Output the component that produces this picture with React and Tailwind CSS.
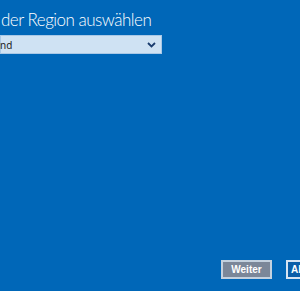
export default function App() {
  return (
    <div className="w-[300px] h-[291px] overflow-hidden bg-[#0067b8] flex flex-col font-['Noto_Sans',sans-serif]">
      {/* Title, cut off on the left */}
      <h1 className="mt-[10px] ml-[1px] text-[17px] leading-[20px] font-light tracking-[-0.5px] text-white whitespace-nowrap font-['Lato',sans-serif]">
        der Region auswählen
      </h1>

      {/* Country select */}
      <div className="mt-[5px] w-[162px] h-[19px] bg-[#cfe2f3] border border-[#a9c8e6] flex items-center justify-between pr-[5px]">
        <span className="text-[10px] text-[#222] leading-none -ml-[1px]">nd</span>
        <svg width="9" height="6" viewBox="0 0 9 6" className="text-[#1a3c6e]">
          <path d="M1 1 L4.5 4.5 L8 1" fill="none" stroke="currentColor" strokeWidth="1.8" />
        </svg>
      </div>

      <div className="flex-1" />

      {/* Buttons */}
      <div className="mb-[12px] flex gap-[14px] pl-[221px] whitespace-nowrap">
        <button className="w-[51px] h-[19px] shrink-0 bg-[#7b8799] border-2 border-[#c3d1df] text-white text-[10px] font-bold leading-none font-['Liberation_Sans',sans-serif]">
          Weiter
        </button>
        <button className="w-[60px] h-[19px] shrink-0 bg-[#0a5ea8] border-2 border-[#d6e4f2] text-white text-[10px] font-bold leading-none text-left pl-[3px] font-['Liberation_Sans',sans-serif]">
          Abbrechen
        </button>
      </div>
    </div>
  );
}
